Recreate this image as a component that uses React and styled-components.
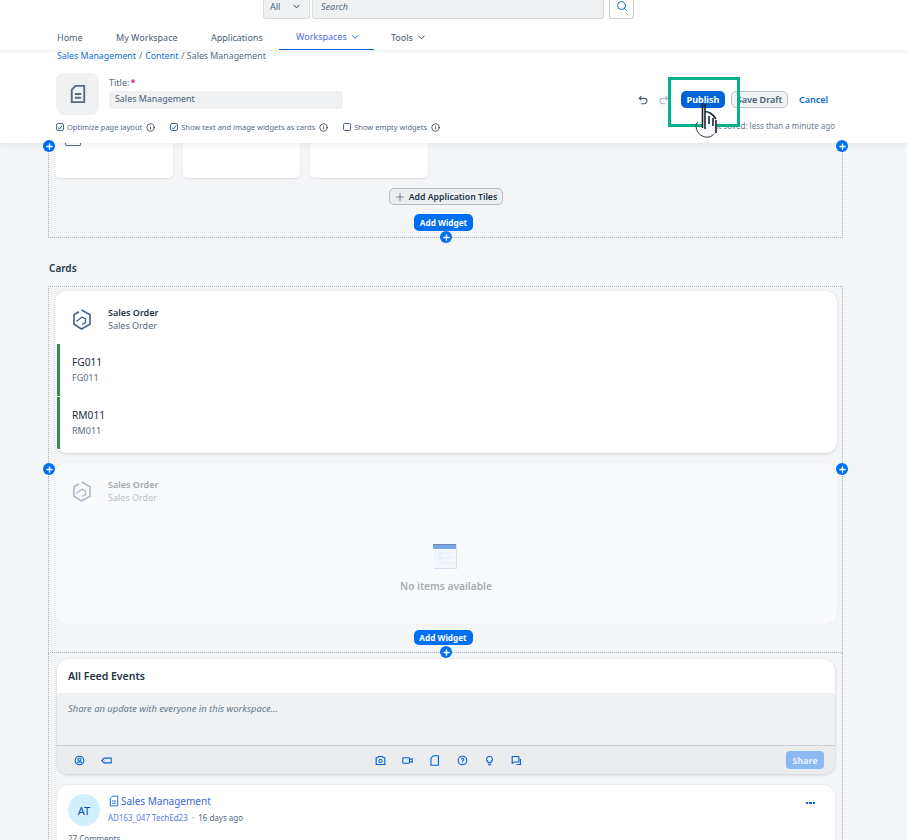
import React from 'react';
import styled, { createGlobalStyle } from 'styled-components';
import { ChevronDown, Search, Plus, Info } from 'lucide-react';

const GlobalStyle = createGlobalStyle`
  html, body {
    margin: 0;
    padding: 0;
    background: #f4f5f7;
    font-family: "Noto Sans", "Open Sans", sans-serif;
    color: #1d2d3e;
  }
  * { box-sizing: border-box; }
`;

const Page = styled.div`
  position: relative;
  width: 907px;
  height: 840px;
  overflow: hidden;
  display: flex;
  flex-direction: column;
`;

const Header = styled.header`
  position: relative;
  z-index: 2;
  height: 143px;
  flex: none;
  background: #fff;
  box-shadow: 0 2px 6px rgba(30, 40, 60, 0.08);
`;

const SearchRow = styled.div`
  height: 19px;
  display: flex;
  padding-left: 263px;
`;

const Scope = styled.div`
  width: 47px;
  height: 19px;
  display: flex;
  align-items: center;
  justify-content: space-between;
  padding: 0 7px 6px 6px;
  background: #eff1f2;
  border: 1px solid #d5dadd;
  border-top: none;
  border-radius: 0 0 3px 3px;
  font-size: 9px;
  color: #475e75;
`;

const SearchInput = styled.div`
  width: 292px;
  height: 19px;
  margin-left: 2px;
  display: flex;
  align-items: center;
  padding: 0 0 6px 8px;
  background: #eff1f2;
  border: 1px solid #d5dadd;
  border-top: none;
  border-radius: 0 0 3px 3px;
  font-size: 9px;
  font-style: italic;
  color: #556b82;
`;

const SearchButton = styled.div`
  width: 25px;
  height: 19px;
  margin-left: 5px;
  padding-bottom: 6px;
  display: flex;
  align-items: center;
  justify-content: center;
  background: #fff;
  border: 1px solid #c9ced3;
  border-top: none;
  border-radius: 0 0 3px 3px;
  color: #0a6ed1;
`;

const Nav = styled.nav`
  height: 31px;
  display: flex;
  padding-left: 57px;
  box-shadow: 0 2px 3px rgba(30, 40, 60, 0.07);
`;

const NavItem = styled.div`
  width: ${p => p.$width}px;
  height: 31px;
  padding: 5px 0 0 ${p => p.$pad || 0}px;
  display: flex;
  align-items: center;
  gap: 3px;
  font-size: 9px;
  color: ${p => (p.$active ? '#4a6ee0' : '#475e75')};
  border-bottom: ${p => (p.$active ? '1px solid #0064d9' : 'none')};

  svg { color: ${p => (p.$active ? '#0064d9' : '#223548')}; }
`;

const Breadcrumb = styled.div`
  height: 12px;
  padding-left: 57px;
  display: flex;
  align-items: center;
  gap: 3px;
  font-size: 8.8px;
  color: #556b82;
  line-height: 12px;
`;

const Crumb = styled.span`
  color: #0a6ed1;
`;

const EditRow = styled.div`
  display: flex;
  margin-top: 11px;
  padding-left: 56px;
  height: 42px;
`;

const IconBox = styled.div`
  width: 43px;
  height: 42px;
  flex: none;
  display: flex;
  align-items: center;
  justify-content: center;
  background: #eff1f2;
  border-radius: 8px;
`;

const TitleGroup = styled.div`
  width: 234px;
  margin-left: 10px;
  display: flex;
  flex-direction: column;
  padding-top: 3px;
`;

const TitleLabel = styled.label`
  height: 15px;
  padding-top: 1px;
  font-size: 9px;
  line-height: 12px;
  color: #556b82;

  b { color: #c0267f; font-weight: 700; margin-left: 1px; }
`;

const TitleInput = styled.div`
  height: 18px;
  display: flex;
  align-items: center;
  padding: 0 0 3px 6px;
  background: #eff1f2;
  border-radius: 3px;
  font-size: 8.9px;
  color: #475e75;
`;

const Actions = styled.div`
  margin-left: auto;
  width: 275px;
  padding-top: 18px;
  display: flex;
  align-items: flex-start;
`;

const HistoryButton = styled.div`
  width: ${p => (p.$off ? 20 : 22)}px;
  height: 17px;
  display: flex;
  align-items: center;
  justify-content: center;
  color: ${p => (p.$off ? '#a9b4be' : '#475e75')};
`;

const Button = styled.div`
  height: 17px;
  display: flex;
  align-items: center;
  justify-content: center;
  border-radius: 5px;
  font-size: 9px;
  font-weight: 700;
`;

const PublishButton = styled(Button)`
  width: 44px;
  margin-left: 7px;
  background: #0064d9;
  color: #fff;
`;

const DraftButton = styled(Button)`
  width: 57px;
  margin-left: 6px;
  background: #eff1f2;
  border: 1px solid #bcc3ca;
  color: #475e75;
  font-weight: 600;
`;

const CancelButton = styled(Button)`
  margin-left: 11px;
  color: #0a6ed1;
  font-weight: 600;
`;

const OptionRow = styled.div`
  display: flex;
  align-items: center;
  height: 14px;
  margin-top: 5px;
  padding: 0 72px 0 56px;
`;

const Option = styled.div`
  display: flex;
  align-items: center;
  margin-right: ${p => p.$gap}px;
  font-size: 7.5px;
  color: #556b82;
  white-space: nowrap;

  > svg { margin-left: 4px; color: #223548; }
`;

const Check = styled.span`
  width: 8px;
  height: 8px;
  margin-right: 3px;
  flex: none;
  display: flex;
  align-items: center;
  justify-content: center;
  border: 1px solid #556b82;
  border-radius: 2px;
  background: #fff;
`;

const Saved = styled.div`
  margin-left: auto;
  padding-bottom: 3px;
  font-size: 8px;
  color: #6a7c8f;
  white-space: nowrap;
`;

const Highlight = styled.div`
  position: absolute;
  z-index: 3;
  left: 668px;
  top: 77px;
  width: 72px;
  height: 50px;
  border: 3px solid #0aaf8c;
`;

const Content = styled.main`
  flex: 1;
  min-height: 0;
  display: flex;
  flex-direction: column;
  padding: 0 64px 0 48px;
`;

const TilesSection = styled.section`
  position: relative;
  height: 95px;
  flex: none;
  border: 1px dotted #a9b0b6;
  border-top: none;
`;

const TileRow = styled.div`
  display: flex;
  gap: 10px;
  padding-left: 6px;
`;

const Tile = styled.div`
  width: 117.5px;
  height: 35px;
  overflow: hidden;
  background: #fff;
  border-radius: 0 0 5px 5px;
  box-shadow: 0 1px 2px rgba(30, 40, 60, 0.1);
`;

const ClippedIcon = styled.span`
  display: block;
  width: 16px;
  height: 3px;
  margin-left: 10px;
  border: 1.5px solid #556b82;
  border-top: none;
  border-radius: 0 0 2px 2px;
`;

const AddTilesRow = styled.div`
  display: flex;
  justify-content: center;
  margin-top: 10px;
`;

const AddTiles = styled.div`
  width: 114px;
  height: 17px;
  display: flex;
  align-items: center;
  justify-content: center;
  gap: 3px;
  background: #eceef0;
  border: 1px solid #b4bbc2;
  border-radius: 5px;
  font-size: 8.7px;
  font-weight: 600;
  color: #223548;

  svg { color: #475e75; }
`;

const WidgetRow = styled.div`
  display: flex;
  justify-content: center;
  margin-top: ${p => p.$top}px;
  padding-right: ${p => p.$right}px;
`;

const AddWidget = styled.div`
  width: 59px;
  height: ${p => p.$h || 17}px;
  display: flex;
  align-items: center;
  justify-content: center;
  background: #0070f2;
  color: #fff;
  font-size: 8.2px;
  font-weight: 700;
  border-radius: 5px;
`;

const PlusDot = styled.span`
  position: absolute;
  z-index: 3;
  left: ${p => p.$x}px;
  ${p => (p.$bottom !== undefined ? `bottom: ${p.$bottom}px;` : `top: ${p.$top}px;`)}
  width: 12px;
  height: 12px;
  display: flex;
  align-items: center;
  justify-content: center;
  background: #0070f2;
  border-radius: 50%;
  color: #fff;
`;

const SectionTitle = styled.h2`
  margin: 23px 0 11px 1px;
  height: 14px;
  line-height: 14px;
  font-size: 10px;
  font-weight: 600;
  color: #223548;
`;

const CardsSection = styled.section`
  position: relative;
  flex: none;
  height: 367px;
  border: 1px dotted #a9b0b6;
  padding: 4px 5px 0 6px;
`;

const Card = styled.div`
  height: ${p => p.$h}px;
  margin-bottom: ${p => p.$mb || 0}px;
  background: ${p => (p.$faded ? '#f9fafb' : '#fff')};
  border-radius: 12px;
  overflow: hidden;
  box-shadow: ${p => (p.$faded ? '0 0 2px rgba(30, 40, 60, 0.06)' : '0 1px 3px rgba(30, 40, 60, 0.16)')};
`;

const CardHead = styled.div`
  height: 53px;
  display: flex;
  align-items: center;
  padding: 3px 0 0 18px;
  gap: 17px;
  opacity: ${p => (p.$faded ? 0.42 : 1)};
`;

const CardTitle = styled.div`
  font-size: 9px;
  line-height: 13px;
  font-weight: 600;
  color: #223548;
`;

const CardSub = styled.div`
  font-size: 9px;
  line-height: 13px;
  color: #556b82;
`;

const OrderRow = styled.div`
  height: 52px;
  margin: 0 0 1px 2px;
  padding: 11px 0 0 12px;
  border-left: 3px solid #2f8f4e;
`;

const OrderName = styled.div`
  font-size: 10.2px;
  line-height: 15px;
  color: #1d2d3e;
`;

const OrderCode = styled.div`
  margin-top: 1px;
  font-size: 9px;
  line-height: 13px;
  color: #556b82;
`;

const Empty = styled.div`
  display: flex;
  flex-direction: column;
  align-items: center;
  padding-top: 28px;

  svg { margin-right: 2px; }
`;

const EmptyText = styled.div`
  margin-top: 10px;
  font-size: 10.2px;
  font-weight: 600;
  color: #a5adb5;
`;

const FeedSection = styled.section`
  flex: 1;
  padding: 6px 7px 0 8px;
  border-left: 1px dotted #a9b0b6;
  border-right: 1px dotted #a9b0b6;
`;

const FeedCard = styled.div`
  height: 115px;
  overflow: hidden;
  background: #fff;
  border-radius: 12px;
  box-shadow: 0 1px 3px rgba(30, 40, 60, 0.2);
`;

const FeedHead = styled.div`
  height: 34px;
  display: flex;
  align-items: center;
  padding-left: 11px;
  font-size: 10.5px;
  font-weight: 600;
  color: #223548;
`;

const FeedInput = styled.div`
  height: 53px;
  padding: 9px 0 0 11px;
  background: #eff1f2;
  border-bottom: 1px solid #c9ced3;
  font-size: 9.4px;
  font-style: italic;
  color: #677b8e;
`;

const FeedTools = styled.div`
  height: 28px;
  display: flex;
  align-items: center;
  padding: 0 11px 0 16.5px;
  background: #eaecee;
`;

const ToolGroup = styled.div`
  display: flex;
  align-items: center;
  gap: 16.3px;
  margin-left: ${p => p.$left || 0}px;
  color: #0064d9;
`;

const ShareButton = styled.div`
  width: 38px;
  height: 18px;
  margin-left: auto;
  display: flex;
  align-items: center;
  justify-content: center;
  border-radius: 4px;
  background: #8ab8f0;
  color: #e8f1fc;
  font-size: 9px;
  font-weight: 700;
`;

const PostCard = styled.article`
  position: relative;
  height: 80px;
  margin-top: 11px;
  padding: 9px 11px;
  background: #fff;
  border-radius: 12px 12px 0 0;
  box-shadow: 0 0 2px rgba(30, 40, 60, 0.12);
`;

const PostTop = styled.div`
  display: flex;
  gap: 8px;
`;

const Avatar = styled.div`
  width: 32px;
  height: 32px;
  flex: none;
  display: flex;
  align-items: center;
  justify-content: center;
  border-radius: 50%;
  background: #d1efff;
  color: #0a4ca8;
  font-size: 11px;
`;

const PostTitle = styled.div`
  display: flex;
  align-items: center;
  gap: 1px;
  height: 14px;
  font-size: 10px;
  color: #3a66d8;
`;

const PostMeta = styled.div`
  margin-top: 4px;
  font-size: 8px;
  line-height: 12px;
  color: #556b82;

  a { color: #5a7be6; }
`;

const Comments = styled.div`
  margin-top: 7px;
  font-size: 8px;
  line-height: 12px;
  color: #556b82;
`;

const MoreDots = styled.div`
  position: absolute;
  right: 20px;
  top: 17px;
  display: flex;
  gap: 1px;

  span { width: 2.5px; height: 2px; background: #0064d9; }
`;

const CursorLayer = styled.div`
  position: absolute;
  z-index: 4;
  left: 691px;
  top: 98px;
  line-height: 0;
`;

const HandCursor = () => (
  <CursorLayer>
    <svg width="34" height="44" viewBox="0 0 34 44">
      <path d="M7 24 a5 5 0 0 0 -2 5 c1 7 7 11 13 10 c4-1 7-5 7-8" fill="none" stroke="#223548" strokeWidth="1" />
      <path d="M12 12 v20 l2 4 h8 c3-1 3-3 3-6 v-10 c-3-2-5-2-6-2 c-2-1-3-1-4-1 v-5 c0-2-3-2-3 0z" fill="#fff" />
      <path d="M11.5 5 v25 M14 6 v25 M18 18 v8 M22 20 v8 M25 22 v13 M14 14 c3-1 8 2 11 7" fill="none" stroke="#1a2433" strokeWidth="1.6" />
    </svg>
  </CursorLayer>
);

const DocIcon = ({ size = 20, color = '#556b82', sw = 1.5 }) => (
  <svg width={size} height={size} viewBox="0 0 16 16" fill="none" stroke={color} strokeWidth={sw}>
    <path d="M6 1.5h7v13H3V4.5z" strokeLinejoin="round" />
    <path d="M5.5 8h5M5.5 11h5" />
  </svg>
);

const UndoIcon = ({ flip }) => (
  <svg width="10" height="10" viewBox="0 0 12 12" fill="none" stroke="currentColor" strokeWidth="1.3" style={flip ? { transform: 'scaleX(-1)' } : undefined}>
    <path d="M4 1.5 1.5 4 4 6.5M1.5 4H7.5a3 3 0 0 1 0 6.5H4" />
  </svg>
);

const HexLogo = ({ color = '#46688c' }) => (
  <svg width="18" height="21" viewBox="0 0 18 21" fill="none" stroke={color} strokeWidth="1.7">
    <path d="M8.5 1 17 5.8v9.4L8.5 20 1 15.2V5.8L6 2.8" />
    <path d="M3.5 12.5 9 8 12.5 10v3.5L9 15.5" strokeWidth="1.4" />
  </svg>
);

const EmptyIcon = () => (
  <svg width="24" height="25" viewBox="0 0 24 25">
    <rect x="1" y="1" width="23" height="24" fill="#dcdff0" />
    <rect x="0" y="0" width="23" height="24" fill="#f3f7fc" />
    <rect x="0" y="0" width="23" height="5" fill="#7ba7e8" />
    <rect x="0" y="0" width="23" height="1" fill="#6f86b0" />
    <path d="M2 9h19M2 14h19M2 19h19M7 6v16" stroke="#e3eefa" strokeWidth="1" />
  </svg>
);

const toolPaths = {
  person: <><circle cx="7" cy="7" r="5.5" /><circle cx="7" cy="5.8" r="2" /><path d="M3.5 10.5c1-2 6-2 7 0" /></>,
  tag: <path d="M1 7 4 4h9v6H4zM4 7h.5" />,
  camera: <><path d="M1.5 3.5h2l1-1.5h5l1 1.5h2v8.5h-11z" /><circle cx="7" cy="7.5" r="2" /></>,
  video: <><rect x="1" y="3.5" width="8.5" height="7" rx="1" /><path d="M9.5 6 13 4.5v5L9.5 8" /></>,
  file: <path d="M5.5 1h6.5v12H2.5V4z" />,
  help: <><circle cx="7" cy="7" r="5.5" /><path d="M5.5 5.5c.3-2 3.2-1.8 3.2 0 0 1.2-1.7 1.3-1.7 2.7M7 9.5v1" /></>,
  bulb: <><path d="M7 1.5a3.8 3.8 0 0 1 2 7l-.5 1.5h-3L5 8.5a3.8 3.8 0 0 1 2-7z" /><path d="M5 12.5h4" /></>,
  chat: <path d="M1.5 2h8.5v7H4l-2.5 1.5zM12 5v7.5M7 12h6" />,
};

const ToolIcon = ({ name }) => (
  <svg width="11" height="11" viewBox="0 0 14 14" fill="none" stroke="currentColor" strokeWidth="1.4">
    {toolPaths[name]}
  </svg>
);

const Tick = () => (
  <svg width="7" height="7" viewBox="0 0 8 8" fill="none" stroke="#0064d9" strokeWidth="1.3">
    <path d="M1 4 3.2 6 7 1.5" />
  </svg>
);

const AddDot = props => (
  <PlusDot {...props}>
    <Plus size={9} strokeWidth={3.5} />
  </PlusDot>
);

const CardHeader = ({ faded }) => (
  <CardHead $faded={faded}>
    <HexLogo />
    <div>
      <CardTitle>Sales Order</CardTitle>
      <CardSub>Sales Order</CardSub>
    </div>
  </CardHead>
);

export default function App() {
  return (
    <Page>
      <GlobalStyle />
      <Header>
        <SearchRow>
          <Scope>All <ChevronDown size={11} color="#223548" /></Scope>
          <SearchInput>Search</SearchInput>
          <SearchButton><Search size={12} strokeWidth={2} /></SearchButton>
        </SearchRow>
        <Nav>
          <NavItem $width={59}>Home</NavItem>
          <NavItem $width={95}>My Workspace</NavItem>
          <NavItem $width={68}>Applications</NavItem>
          <NavItem $width={95} $pad={17} $active>Workspaces <ChevronDown size={10} strokeWidth={2.2} /></NavItem>
          <NavItem $width={70} $pad={17}>Tools <ChevronDown size={11} strokeWidth={2} /></NavItem>
        </Nav>
        <Breadcrumb>
          <Crumb>Sales Management</Crumb> / <Crumb>Content</Crumb> / Sales Management
        </Breadcrumb>
        <EditRow>
          <IconBox><DocIcon /></IconBox>
          <TitleGroup>
            <TitleLabel>Title:<b>*</b></TitleLabel>
            <TitleInput>Sales Management</TitleInput>
          </TitleGroup>
          <Actions>
            <HistoryButton><UndoIcon /></HistoryButton>
            <HistoryButton $off><UndoIcon flip /></HistoryButton>
            <PublishButton>Publish</PublishButton>
            <DraftButton>Save Draft</DraftButton>
            <CancelButton>Cancel</CancelButton>
          </Actions>
        </EditRow>
        <OptionRow>
          <Option $gap={15}><Check><Tick /></Check>Optimize page layout<Info size={9} /></Option>
          <Option $gap={15}><Check><Tick /></Check>Show text and image widgets as cards<Info size={9} /></Option>
          <Option $gap={0}><Check />Show empty widgets<Info size={9} /></Option>
          <Saved>Last saved: less than a minute ago</Saved>
        </OptionRow>
      </Header>
      <Highlight />
      <HandCursor />
      <Content>
        <TilesSection>
          <AddDot $x={-6} $top={-3} />
          <AddDot $x={787} $top={-3} />
          <TileRow>
            <Tile><ClippedIcon /></Tile>
            <Tile />
            <Tile />
          </TileRow>
          <AddTilesRow>
            <AddTiles><Plus size={12} strokeWidth={1.5} />Add Application Tiles</AddTiles>
          </AddTilesRow>
          <WidgetRow $top={9} $right={4}><AddWidget>Add Widget</AddWidget></WidgetRow>
          <AddDot $x={391} $bottom={-6} />
        </TilesSection>
        <SectionTitle>Cards</SectionTitle>
        <CardsSection>
          <Card $h={162} $mb={10}>
            <CardHeader />
            <OrderRow>
              <OrderName>FG011</OrderName>
              <OrderCode>FG011</OrderCode>
            </OrderRow>
            <OrderRow>
              <OrderName>RM011</OrderName>
              <OrderCode>RM011</OrderCode>
            </OrderRow>
          </Card>
          <AddDot $x={-6} $top={176} />
          <AddDot $x={787} $top={176} />
          <Card $h={161} $faded>
            <CardHeader faded />
            <Empty>
              <EmptyIcon />
              <EmptyText>No items available</EmptyText>
            </Empty>
          </Card>
          <WidgetRow $top={6} $right={6}><AddWidget $h={15}>Add Widget</AddWidget></WidgetRow>
          <AddDot $x={391} $bottom={-6} />
        </CardsSection>
        <FeedSection>
          <FeedCard>
            <FeedHead>All Feed Events</FeedHead>
            <FeedInput>Share an update with everyone in this workspace...</FeedInput>
            <FeedTools>
              <ToolGroup>
                <ToolIcon name="person" />
                <ToolIcon name="tag" />
              </ToolGroup>
              <ToolGroup $left={263}>
                <ToolIcon name="camera" />
                <ToolIcon name="video" />
                <ToolIcon name="file" />
                <ToolIcon name="help" />
                <ToolIcon name="bulb" />
                <ToolIcon name="chat" />
              </ToolGroup>
              <ShareButton>Share</ShareButton>
            </FeedTools>
          </FeedCard>
          <PostCard>
            <PostTop>
              <Avatar>AT</Avatar>
              <div>
                <PostTitle><DocIcon size={12} color="#0064d9" sw={1.2} />Sales Management</PostTitle>
                <PostMeta><a>AD163_047 TechEd23</a> &nbsp;·&nbsp; 16 days ago</PostMeta>
              </div>
            </PostTop>
            <Comments>27 Comments</Comments>
            <MoreDots><span /><span /><span /></MoreDots>
          </PostCard>
        </FeedSection>
      </Content>
    </Page>
  );
}
